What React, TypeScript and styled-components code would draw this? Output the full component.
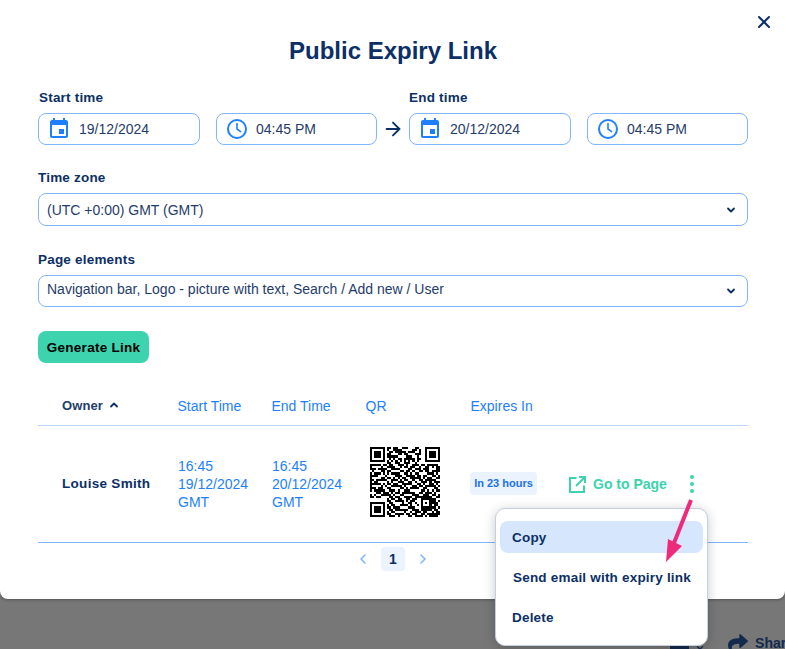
import React from "react";
import styled, { createGlobalStyle } from "styled-components";
import { ArrowRight, X, ChevronDown, ChevronUp, ChevronLeft, ChevronRight } from "lucide-react";
import { FaShare } from "react-icons/fa";

const navy = "#0b2f66";
const blue = "#1e80ff";
const green = "#3cd3ae";

const Global = createGlobalStyle`
  html, body { margin: 0; padding: 0; height: 649px; overflow: hidden; background: #777777; }
  * { box-sizing: border-box; }
  body { font-family: "Liberation Sans", Arial, sans-serif; }
`;

const Page = styled.div`
  position: relative;
  width: 785px;
  height: 649px;
  overflow: hidden;
  background: #777777;
`;

const Modal = styled.section`
  position: relative;
  width: 785px;
  height: 599px;
  padding: 37px 37px 0 38px;
  background: #ffffff;
  border-radius: 0 0 8px 8px;
  box-shadow: 0 1px 3px rgba(0, 0, 0, 0.3);
`;

const CloseButton = styled.button`
  position: absolute;
  top: 12px;
  right: 11px;
  width: 20px;
  height: 20px;
  padding: 0;
  border: 0;
  background: none;
  color: ${navy};
  display: flex;
  align-items: center;
  justify-content: center;
`;

const Title = styled.h1`
  margin: 0 0 24px;
  font-size: 24px;
  line-height: 28px;
  font-weight: 700;
  text-align: center;
  color: ${navy};
`;

const RangeRow = styled.div`
  display: grid;
  grid-template-columns: 339px 32px 339px;
  align-items: end;
`;

const FieldGroup = styled.div`
  display: flex;
  flex-direction: column;
`;

const Pair = styled.div`
  display: grid;
  grid-template-columns: 162px 161px;
  column-gap: 16px;
`;

const Label = styled.label<{ $inset?: number }>`
  display: block;
  height: 16px;
  margin: 0 0 8px ${(p) => p.$inset ?? 0}px;
  font-size: 13.5px;
  line-height: 18px;
  font-weight: 700;
  letter-spacing: 0.2px;
  color: ${navy};
`;

const DateInput = styled.div<{ $pad: number }>`
  display: flex;
  align-items: center;
  height: 32px;
  padding-left: ${(p) => p.$pad}px;
  border: 1px solid #7fb6ff;
  border-radius: 8px;
  font-size: 14px;
  color: #1f3c6b;
  gap: 8px;
  background: #fff;
`;

const ArrowCell = styled.div`
  height: 32px;
  display: flex;
  align-items: center;
  justify-content: center;
  color: ${navy};
`;

const SelectSection = styled.div<{ $top: number }>`
  margin-top: ${(p) => p.$top}px;
`;

const Select = styled.div<{ $h: number }>`
  display: flex;
  align-items: center;
  justify-content: space-between;
  height: ${(p) => p.$h}px;
  padding: 0 10px 0 8px;
  border: 1px solid #7fb6ff;
  border-radius: 8px;
  font-size: 14px;
  color: #1f3c6b;
  width: 710px;
`;

const SelectText = styled.span<{ $lift?: number }>`
  margin-bottom: ${(p) => p.$lift ?? 0}px;
`;

const Generate = styled.button`
  display: block;
  margin-top: 24px;
  width: 111px;
  height: 32px;
  padding: 0;
  border: 0;
  border-radius: 8px;
  background: ${green};
  color: #000;
  font-family: inherit;
  font-size: 13.5px;
  font-weight: 700;
  letter-spacing: 0.25px;
`;

const columns = "24px 116px 94px 94px 105px 97px 1fr";

const HeadRow = styled.div`
  display: grid;
  grid-template-columns: ${columns};
  align-items: center;
  width: 710px;
  height: 39px;
  margin-top: 24px;
  border-bottom: 1px solid #b9d7ff;
`;

const HeadCell = styled.div<{ $col: number }>`
  grid-column: ${(p) => p.$col};
  font-size: 14px;
  color: ${blue};
  margin-left: -0.5px;
`;

const OwnerHead = styled.div`
  grid-column: 2;
  display: flex;
  align-items: center;
  gap: 5px;
  margin-bottom: 2px;
  font-size: 13px;
  font-weight: 700;
  letter-spacing: 0.1px;
  color: #1f3c6b;
`;

const BodyRow = styled.div`
  display: grid;
  grid-template-columns: ${columns};
  align-items: center;
  width: 710px;
  height: 117px;
  border-bottom: 1px solid #7fb6ff;
`;

const OwnerName = styled.div`
  grid-column: 2;
  margin-bottom: 2px;
  font-size: 13.5px;
  font-weight: 700;
  letter-spacing: 0.3px;
  color: ${navy};
`;

const TimeCell = styled.div<{ $col: number }>`
  grid-column: ${(p) => p.$col};
  font-size: 14px;
  line-height: 18px;
  color: ${blue};
`;

const QrCell = styled.div`
  grid-column: 5;
  display: flex;
  padding-left: 4px;
  margin-bottom: 4px;
`;

const Badge = styled.span`
  grid-column: 6;
  justify-self: start;
  margin: 0 0 2px -1px;
  height: 23px;
  width: 67px;
  display: flex;
  align-items: center;
  justify-content: center;
  border-radius: 4px;
  background: #ebf3ff;
  color: #1a72ea;
  font-size: 11px;
  font-weight: 700;
`;

const Actions = styled.div`
  grid-column: 7;
  display: flex;
  align-items: center;
  font-size: 14px;
  font-weight: 700;
  color: ${green};
`;

const GoIcon = styled.svg`
  display: block;
  margin-left: 1px;
`;

const GoLabel = styled.span`
  margin-left: 7px;
`;

const Kebab = styled.span`
  display: flex;
  flex-direction: column;
  gap: 3px;
  margin-left: 23px;
`;

const Dot = styled.i`
  display: block;
  width: 4px;
  height: 4px;
  border-radius: 50%;
  background: ${green};
`;

const Pager = styled.nav`
  display: flex;
  align-items: center;
  justify-content: center;
  gap: 10px;
  width: 710px;
  margin-top: 4px;
  height: 24px;
  color: #7fb6ff;
`;

const PageNumber = styled.span`
  display: flex;
  align-items: center;
  justify-content: center;
  width: 24px;
  height: 24px;
  border-radius: 4px;
  background: #ebf3ff;
  color: ${navy};
  font-size: 14px;
  font-weight: 700;
`;

const BackdropBar = styled.div`
  display: flex;
  justify-content: flex-end;
  align-items: flex-start;
  width: 794px;
  height: 50px;
  padding-top: 34px;
  overflow: hidden;
  color: #142a4d;
  white-space: nowrap;
`;

const BackdropChart = styled.span`
  display: block;
  width: 19px;
  height: 12px;
  margin: 12px 6px 0 0;
  background: #142a4d;
`;

const BackdropCaret = styled.span`
  margin: 10px 23px 0 0;
  display: flex;
`;

const ShareLabel = styled.span`
  margin: 2px 0 0 7px;
  font-size: 14px;
  font-weight: 700;
`;

const Menu = styled.div`
  position: absolute;
  left: 495px;
  top: 508px;
  width: 213px;
  height: 138px;
  padding: 12px 4px;
  display: flex;
  flex-direction: column;
  gap: 8px;
  background: #ffffff;
  border: 1px solid #c4cfdd;
  border-radius: 10px;
  box-shadow: 0 2px 12px rgba(0, 0, 0, 0.22);
`;

const MenuItem = styled.div<{ $active?: boolean; $pad?: number }>`
  height: 32px;
  display: flex;
  align-items: center;
  padding-left: ${(p) => p.$pad ?? 12}px;
  border-radius: 8px;
  background: ${(p) => (p.$active ? "#d5e6fd" : "transparent")};
  color: ${navy};
  font-size: 13.5px;
  font-weight: 700;
  letter-spacing: 0.2px;
  white-space: nowrap;
`;

const Callout = styled.svg`
  position: absolute;
  left: 660px;
  top: 495px;
`;

const qrRows = [
  "000000001101100111000110000000000",
  "000000001001111000001101000000000",
  "000000000110111110111001000000000",
  "000000001100011011000111000000000",
  "000000001111100001110010000000000",
  "000000000101011011111011000000000",
  "000000001010101010101010000000000",
  "000000001100110011100100000000000",
  "111110110110011101001110110111110",
  "100001001111001011011001001101011",
  "111011110011110000110111011100011",
  "010001101100001101101001101101111",
  "101110101011110011010110000111010",
  "111100010000111001111011011001101",
  "100001101101010110011111010110011",
  "110111110011101011001001101111100",
  "101100001010011100110100111010111",
  "111110101101100111110011010011010",
  "100001010011111010001101101111101",
  "111011001100001101011110011000110",
  "101111100111010011100000110101011",
  "000110111010110111111001101110100",
  "101001111101001100001110011101101",
  "110110000110110011110111111110011",
  "000000001011011001101100101101100",
  "000000001100111101011000110111101",
  "000000000110000100110100101011110",
  "000000001011001111010010111100110",
  "000000001101110000111000110111101",
  "000000000110111111001110111110110",
  "000000001011000010010111011001011",
  "000000001100111101101100110111111",
  "000000000111010000110111101011110",
];

const Finder = ({ x, y }: { x: number; y: number }) => (
  <path d={`M${x} ${y}h7v7h-7zM${x + 1} ${y + 1}v5h5v-5zM${x + 2} ${y + 2}h3v3h-3z`} fillRule="evenodd" />
);

const QrCode = () => (
  <svg width="70" height="70" viewBox="0 0 33 33" shapeRendering="crispEdges" fill="#000">
    {qrRows.flatMap((row, y) =>
      row.split("").map((c, x) => (c === "1" ? <rect key={`${x}-${y}`} x={x} y={y} width="1" height="1" /> : null))
    )}
    <Finder x={0} y={0} />
    <Finder x={26} y={0} />
    <Finder x={0} y={26} />
    <rect x="24" y="24" width="5" height="5" fill="#000" />
    <rect x="25" y="25" width="3" height="3" fill="#fff" />
    <rect x="26" y="26" width="1" height="1" fill="#000" />
  </svg>
);

const CalendarIcon = () => (
  <svg width="24" height="24" viewBox="0 0 24 24" fill={blue}>
    <path d="M17 12h-5v5h5v-5zM16 1v2H8V1H6v2H5c-1.11 0-1.99.9-1.99 2L3 19c0 1.1.89 2 2 2h14c1.1 0 2-.9 2-2V5c0-1.1-.9-2-2-2h-1V1h-2zm3 18H5V8h14v11z" />
  </svg>
);

const ClockIcon = () => (
  <svg width="22" height="22" viewBox="0 0 22 22" fill="none" stroke={blue} strokeWidth="2" strokeLinecap="round">
    <circle cx="11" cy="11" r="9" />
    <path d="M11 5.5V11l3.6 2.6" strokeWidth="1.6" />
  </svg>
);

const ExternalIcon = () => (
  <GoIcon width="17" height="17" viewBox="0 0 17 17" fill="none" stroke={green} strokeWidth="2">
    <path d="M7.5 2H1v14h14V9.5" />
    <path d="M7 10 15.5 1.5M10 1h6v6" />
  </GoIcon>
);

const Field = ({ icon, value, pad }: { icon: React.ReactNode; value: string; pad: number }) => (
  <DateInput $pad={pad}>
    {icon}
    <span>{value}</span>
  </DateInput>
);

export default function App() {
  return (
    <Page>
      <Global />
      <Modal>
        <CloseButton aria-label="Close">
          <X size={20} strokeWidth={2.4} />
        </CloseButton>
        <Title>Public Expiry Link</Title>

        <RangeRow>
          <FieldGroup>
            <Label $inset={1}>Start time</Label>
            <Pair>
              <Field icon={<CalendarIcon />} value="19/12/2024" pad={8} />
              <Field icon={<ClockIcon />} value="04:45 PM" pad={9} />
            </Pair>
          </FieldGroup>
          <ArrowCell>
            <ArrowRight size={22} strokeWidth={2} />
          </ArrowCell>
          <FieldGroup>
            <Label>End time</Label>
            <Pair>
              <Field icon={<CalendarIcon />} value="20/12/2024" pad={8} />
              <Field icon={<ClockIcon />} value="04:45 PM" pad={9} />
            </Pair>
          </FieldGroup>
        </RangeRow>

        <SelectSection $top={24}>
          <Label>Time zone</Label>
          <Select $h={33}>
            <SelectText>(UTC +0:00) GMT (GMT)</SelectText>
            <ChevronDown size={12} strokeWidth={3.6} color={navy} />
          </Select>
        </SelectSection>

        <SelectSection $top={25}>
          <Label>Page elements</Label>
          <Select $h={32}>
            <SelectText $lift={5}>Navigation bar, Logo - picture with text, Search / Add new / User</SelectText>
            <ChevronDown size={12} strokeWidth={3.6} color={navy} />
          </Select>
        </SelectSection>

        <Generate>Generate Link</Generate>

        <HeadRow>
          <OwnerHead>
            Owner
            <ChevronUp size={12} strokeWidth={3.6} color={navy} />
          </OwnerHead>
          <HeadCell $col={3}>Start Time</HeadCell>
          <HeadCell $col={4}>End Time</HeadCell>
          <HeadCell $col={5}>QR</HeadCell>
          <HeadCell $col={6}>Expires In</HeadCell>
        </HeadRow>

        <BodyRow>
          <OwnerName>Louise Smith</OwnerName>
          <TimeCell $col={3}>
            16:45
            <br />
            19/12/2024
            <br />
            GMT
          </TimeCell>
          <TimeCell $col={4}>
            16:45
            <br />
            20/12/2024
            <br />
            GMT
          </TimeCell>
          <QrCell>
            <QrCode />
          </QrCell>
          <Badge>In 23 hours</Badge>
          <Actions>
            <ExternalIcon />
            <GoLabel>Go to Page</GoLabel>
            <Kebab>
              <Dot />
              <Dot />
              <Dot />
            </Kebab>
          </Actions>
        </BodyRow>

        <Pager>
          <ChevronLeft size={16} strokeWidth={2.4} />
          <PageNumber>1</PageNumber>
          <ChevronRight size={16} strokeWidth={2.4} />
        </Pager>
      </Modal>

      <BackdropBar>
        <BackdropChart />
        <BackdropCaret>
          <ChevronDown size={10} strokeWidth={3} />
        </BackdropCaret>
        <FaShare size={20} />
        <ShareLabel>Share</ShareLabel>
      </BackdropBar>

      <Menu>
        <MenuItem $active>Copy</MenuItem>
        <MenuItem $pad={13}>Send email with expiry link</MenuItem>
        <MenuItem>Delete</MenuItem>
      </Menu>

      <Callout width="40" height="75" viewBox="0 0 40 75">
        <path d="M31 5 L14 48" stroke="#ee2a7b" strokeWidth="4" fill="none" />
        <path d="M6 67 L8 44 L22 51 Z" fill="#ee2a7b" />
      </Callout>
    </Page>
  );
}
